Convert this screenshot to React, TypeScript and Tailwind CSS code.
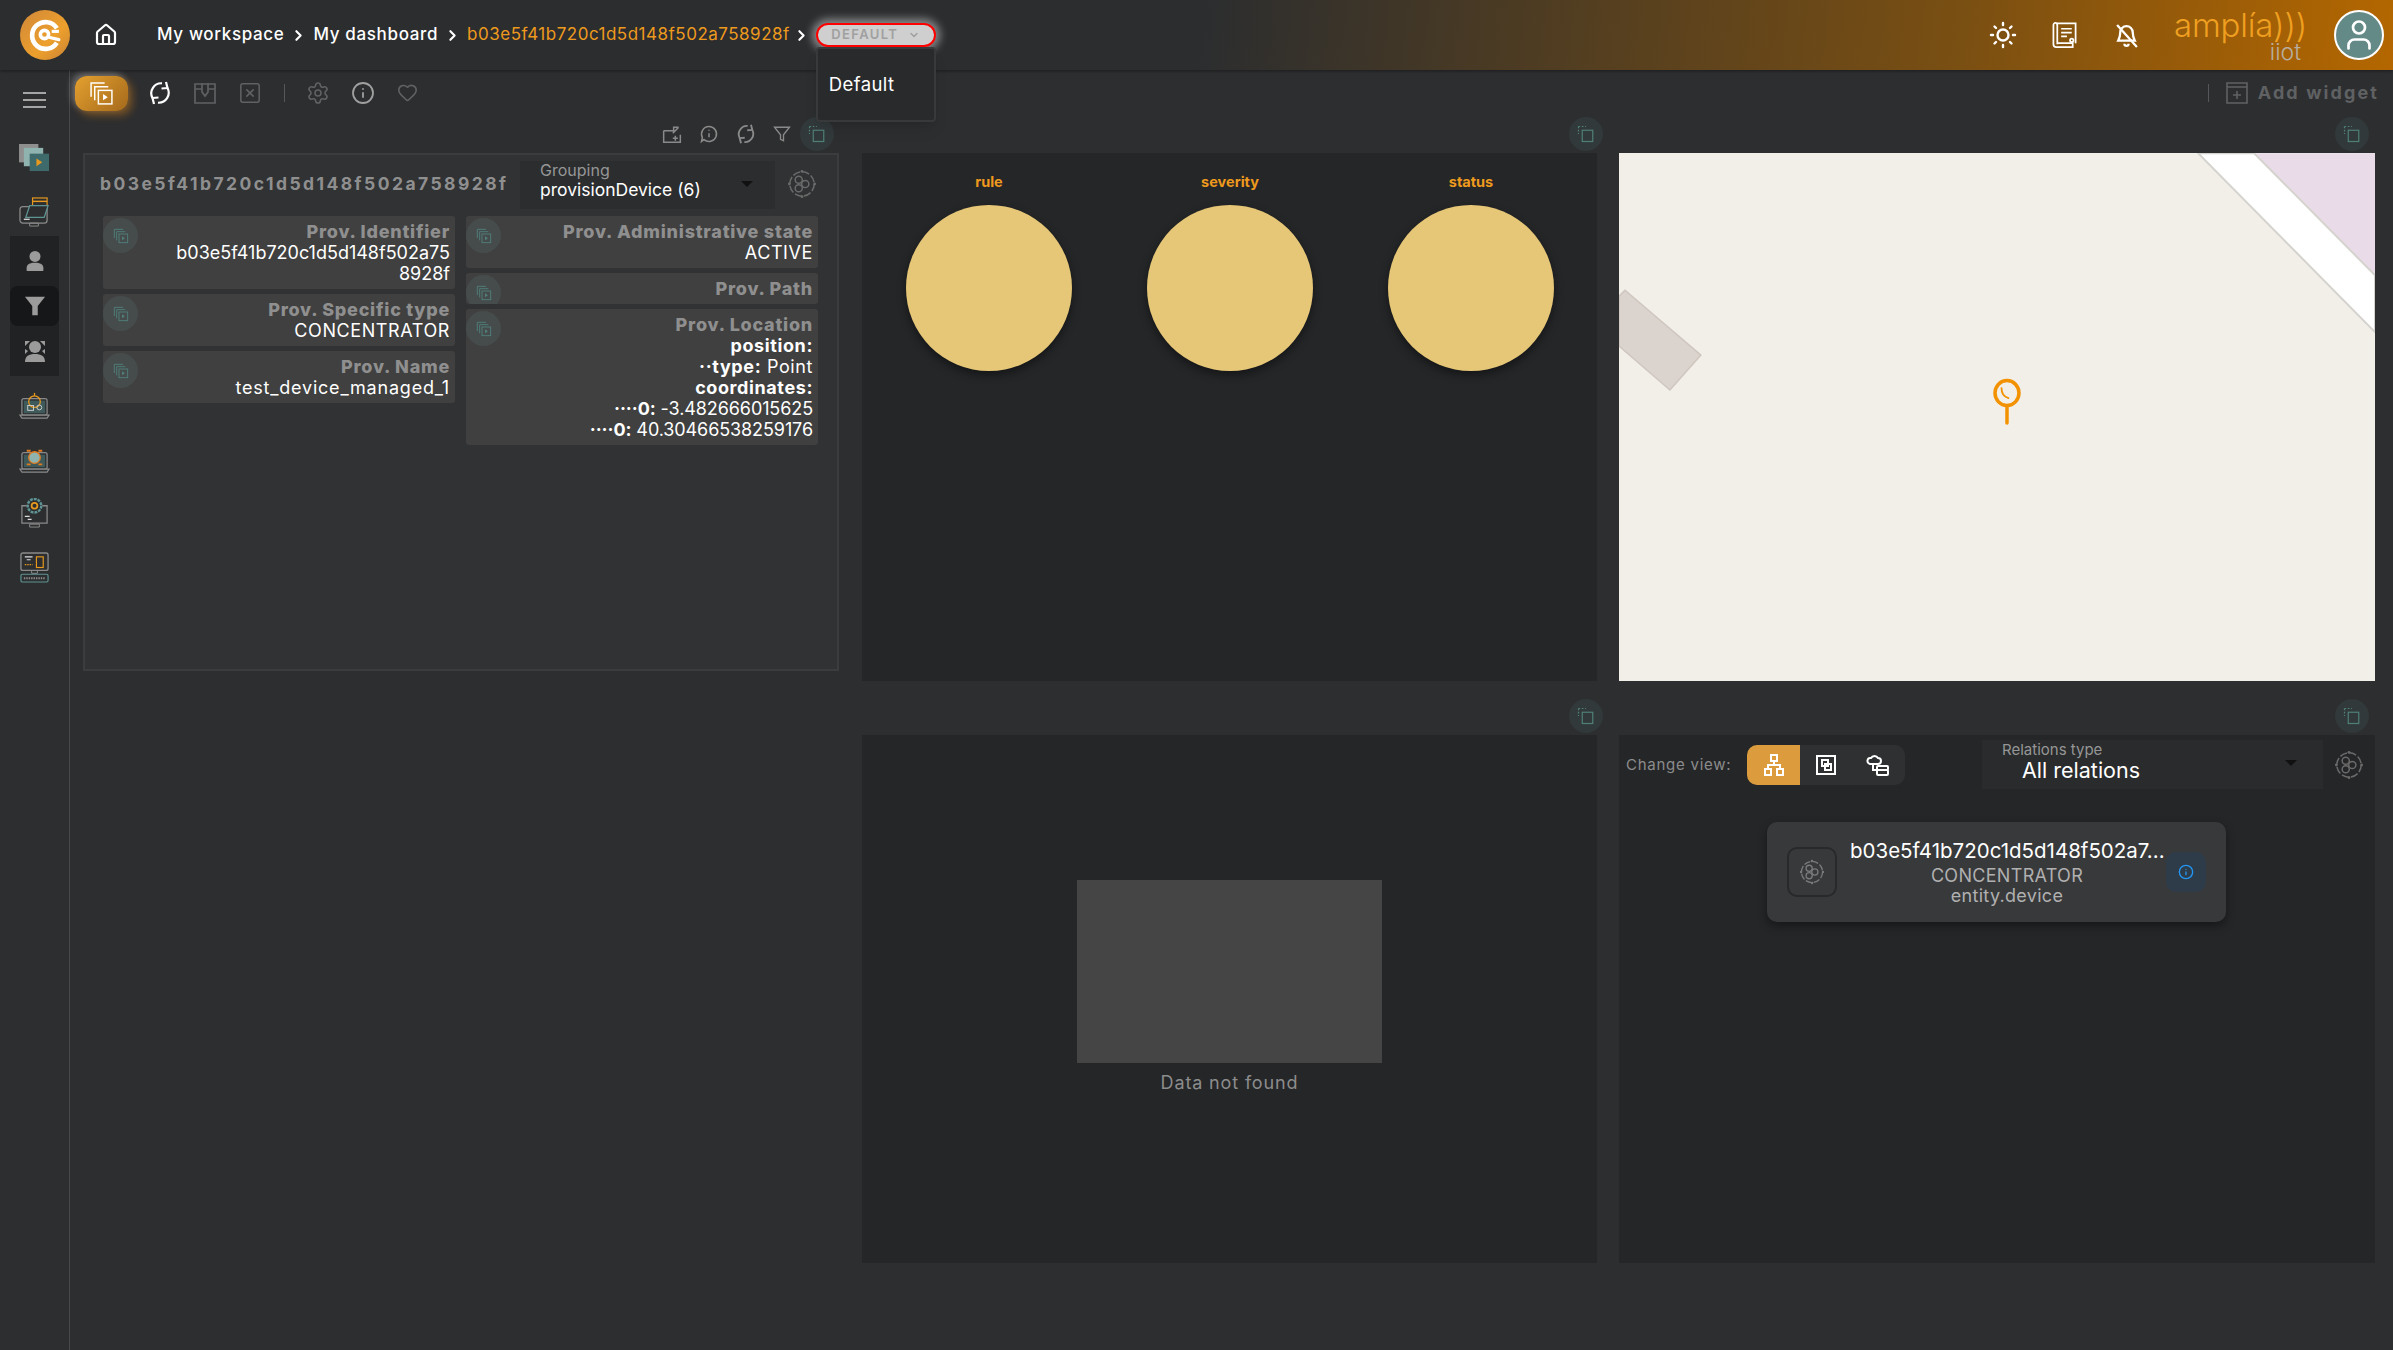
import { ChevronDown, ChevronRight, Home, Info, Heart, Settings, User } from 'lucide-react';

// small reusable drawings
function CopyPlay({ className }: { className?: string }) {
  return (
    <svg viewBox="0 0 24 24" fill="none" stroke="currentColor" strokeWidth="1.400" className={className}>
      <path d="M2 15V2h13" />
      <path d="M5.500 18.500V5.500h13" />
      <rect x="9" y="9" width="13" height="13" />
      <path d="M13.500 12.500v6l4.500-3z" fill="currentColor" stroke="none" />
    </svg>
  );
}

function DashCopy({ className }: { className?: string }) {
  return (
    <svg viewBox="0 0 24 24" fill="none" stroke="currentColor" strokeWidth="1.600" className={className}>
      <path d="M2 2h10M2 2v10" strokeDasharray="2.200 2.200" />
      <rect x="7" y="7" width="14" height="15" />
    </svg>
  );
}

function TargetIcon({ className }: { className?: string }) {
  return (
    <svg viewBox="0 0 32 32" fill="none" stroke="currentColor" strokeWidth="1.600" className={className}>
      <path d="M16 3a13 13 0 0 1 13 13M29 16a13 13 0 0 1-13 13M16 29A13 13 0 0 1 3 16M3 16A13 13 0 0 1 16 3" strokeDasharray="8 2.200" />
      <circle cx="16" cy="2.500" r="1.500" fill="currentColor" stroke="none" />
      <circle cx="16" cy="29.500" r="1.500" fill="currentColor" stroke="none" />
      <circle cx="2.500" cy="16" r="1.500" fill="currentColor" stroke="none" />
      <circle cx="29.500" cy="16" r="1.500" fill="currentColor" stroke="none" />
      <circle cx="12.500" cy="11.500" r="3.800" />
      <circle cx="12.500" cy="20.500" r="3.800" />
      <circle cx="19.500" cy="16" r="3.800" />
    </svg>
  );
}

function RefreshIcon({ className }: { className?: string }) {
  return (
    <svg viewBox="0 0 24 24" fill="none" stroke="currentColor" strokeWidth="2.200" className={className}>
      <path d="M4.500 17A10 10 0 0 1 14 2.300" />
      <path d="M19.500 7A10 10 0 0 1 10 21.700" />
      <path d="M18 1l1.500 6-6 .5" strokeLinejoin="round" fill="none" />
      <path d="M6 23l-1.500-6 6-.5" strokeLinejoin="round" fill="none" />
    </svg>
  );
}

function Laptop({ children }: { children?: React.ReactNode }) {
  return (
    <svg viewBox="0 0 32 32" fill="none" className="w-[31px] h-[31px]">
      <rect x="3" y="9" width="26" height="17" rx="2" stroke="#8a8a8a" strokeWidth="1.300" />
      <rect x="5" y="11" width="22" height="13" fill="#3f5a5a" />
      <path d="M1 26h30l-2 3H3z" stroke="#8a8a8a" strokeWidth="1.200" fill="#2c2e30" />
      {children}
    </svg>
  );
}

function Sidebar() {
  return (
    <aside className="w-[70px] shrink-0 border-r border-[#46484a] flex flex-col items-center pt-[22px]">
      <div className="flex flex-col gap-[5px] mb-[36px]">
        <div className="w-[23px] h-[2px] bg-[#a5a5a5]" />
        <div className="w-[23px] h-[2px] bg-[#a5a5a5]" />
        <div className="w-[23px] h-[2px] bg-[#a5a5a5]" />
      </div>
      <svg viewBox="0 0 32 30" className="w-[31px] h-[29px] mb-[24px]">
        <rect x="0" y="0" width="20" height="19" fill="#8f8f8f" />
        <rect x="5" y="4" width="20" height="19" fill="#8fb3ae" />
        <rect x="11" y="10" width="20" height="18" fill="#3f6a6c" />
        <path d="M18 15v8l6-4z" fill="#e89a1e" />
      </svg>
      <svg viewBox="0 0 32 32" fill="none" className="w-[31px] h-[31px] mb-[8px]">
        <rect x="14" y="1" width="15" height="11" stroke="#e89a1e" strokeWidth="1.200" />
        <path d="M14 4.500h15" stroke="#e89a1e" strokeWidth="1.500" />
        <rect x="1" y="10" width="28" height="17" rx="3" stroke="#8a8a8a" strokeWidth="1.300" />
        <path d="M11 9h19l-4 12H7z" stroke="#5f9494" strokeWidth="1.300" fill="#2c2e30" />
        <path d="M5 23h6" stroke="#ddd" strokeWidth="1.300" />
        <path d="M11 27h9v3h-9z" stroke="#8a8a8a" />
      </svg>
      <div className="w-[49px] h-[140px] bg-[#212223] flex flex-col items-center">
        <div className="h-[50px] flex items-center">
          <svg viewBox="0 0 24 24" fill="#9b9b9b" className="w-[22px] h-[22px]">
            <circle cx="12" cy="7" r="6" />
            <path d="M3 23c-1-7 2-9 9-9s10 2 9 9z" />
          </svg>
        </div>
        <div className="h-[40px] w-[49px] flex items-center justify-center rounded-lg bg-[#161718]">
          <svg viewBox="0 0 24 24" fill="#9b9b9b" className="w-[22px] h-[22px]">
            <path d="M1 2h22l-8 10v10h-6V12z" />
          </svg>
        </div>
        <div className="h-[50px] w-[49px] flex items-center justify-center">
          <svg viewBox="0 0 24 24" className="w-[24px] h-[24px]" fill="#9b9b9b">
            <path d="M2 2h5l-5 5zM22 2h-5l5 5zM2 10l3 2-3 3zM22 10l-3 2 3 3z" />
            <circle cx="12" cy="8" r="6" />
            <path d="M2 23c0-6 4-8 10-8s10 2 10 8z" />
          </svg>
        </div>
      </div>
      <div className="flex flex-col gap-[23px] mt-[14px]">
        <Laptop>
          <circle cx="16" cy="12" r="6" stroke="#e89a1e" strokeWidth="1.300" />
          <path d="M16 3v3" stroke="#e89a1e" strokeWidth="1.300" />
          <rect x="9" y="16" width="6" height="5" stroke="#ccc" />
          <circle cx="21" cy="18" r="2.500" stroke="#ccc" />
        </Laptop>
        <Laptop>
          <circle cx="16" cy="14" r="6" fill="#8fb3ae" stroke="#e07a1e" strokeWidth="1.300" />
          <path d="M8 7h4M20 7h4M8 21h4M20 21h4" stroke="#e07a1e" strokeWidth="2" />
        </Laptop>
        <svg viewBox="0 0 32 32" fill="none" className="w-[31px] h-[31px]">
          <path d="M8 8H3v18h26V8h-5" stroke="#8a8a8a" strokeWidth="1.300" />
          <path d="M11 27h10v3H11z" stroke="#8a8a8a" />
          <circle cx="16" cy="8" r="7" stroke="#5f9494" strokeWidth="2.500" strokeDasharray="3 1" />
          <circle cx="16" cy="8" r="3" stroke="#e89a1e" strokeWidth="1.800" />
          <path d="M6 19h5M9 22h4" stroke="#ddd" strokeWidth="1.300" />
        </svg>
        <svg viewBox="0 0 32 32" fill="none" className="w-[31px] h-[31px]">
          <rect x="2" y="1" width="28" height="18" rx="2" stroke="#8a8a8a" strokeWidth="1.400" />
          <path d="M6 5h8M8 8h4" stroke="#ddd" strokeWidth="1.200" />
          <rect x="18" y="5" width="7" height="11" stroke="#e89a1e" strokeWidth="1.200" />
          <path d="M6 13h8" stroke="#e89a1e" strokeWidth="1.200" strokeDasharray="1.500 1" />
          <path d="M13 19v3h6v-3" stroke="#8a8a8a" />
          <rect x="2" y="23" width="28" height="8" rx="1.500" stroke="#5f9494" strokeWidth="1.200" />
          <path d="M5 27h22" stroke="#8a8a8a" strokeWidth="2" strokeDasharray="1.500 1" />
        </svg>
      </div>
    </aside>
  );
}

function Header() {
  return (
    <header className="relative z-10 h-[70px] shrink-0 flex items-center pl-[20px] pr-[9px] bg-[linear-gradient(97deg,#2b2d2f_0%,#2b2d2f_50%,#7a4f12_82%,#b46700_100%)] shadow-[0_1px_3px_rgba(0,0,0,0.4)]">
      <div className="w-[50px] h-[50px] rounded-full bg-[linear-gradient(135deg,#d0873a,#eda02c_60%,#c98234)] flex items-center justify-center">
        <svg viewBox="0 0 32 32" fill="none" className="w-[33px] h-[33px]">
          <path d="M27 9A13 13 0 1 0 27 23" stroke="#fff" strokeWidth="4.500" />
          <circle cx="15" cy="15" r="4" stroke="#fff" strokeWidth="3.500" />
          <path d="M20 18l9 2" stroke="#fff" strokeWidth="3" strokeLinecap="round" />
          <path d="M22 12h7" stroke="#fff" strokeWidth="3" />
        </svg>
      </div>
      <Home className="w-[24px] h-[24px] text-white ml-[24px]" strokeWidth={2.200} />
      <nav className="flex items-center ml-[39px] text-[17px] font-medium text-white tracking-[0.65px]">
        <span>My workspace</span>
        <ChevronRight className="w-[17px] h-[17px] mx-[6px]" strokeWidth={3} />
        <span>My dashboard</span>
        <ChevronRight className="w-[17px] h-[17px] mx-[6px]" strokeWidth={3} />
        <span className="text-[#ee9a1d] font-normal tracking-[0.5px]">b03e5f41b720c1d5d148f502a758928f</span>
        <ChevronRight className="w-[17px] h-[17px] mx-[3px]" strokeWidth={3} />
      </nav>
      <div className="relative ml-[3px] w-[120px] h-[24px]">
        <div className="w-full h-full rounded-full border-[2px] border-[#f00] bg-[#cfcfcf] shadow-[0_0_8px_4px_rgba(255,255,255,0.45)] flex items-center justify-center gap-[10px] text-[13px] font-semibold tracking-[1.400px] text-[#a0a0a0]">
          DEFAULT
          <ChevronDown className="w-[12px] h-[12px]" strokeWidth={3} />
        </div>
        <div className="absolute left-0 top-[24px] w-[120px] h-[75px] rounded border-[2px] border-[#38393b] bg-[#292a2c] flex items-center pl-[11px] text-[18.500px] tracking-[0.4px] text-white shadow-lg">
          Default
        </div>
      </div>
      <div className="ml-auto flex items-center">
        <svg viewBox="0 0 28 28" fill="none" stroke="#fff" strokeWidth="2.400" strokeLinecap="round" className="w-[28px] h-[28px]">
          <circle cx="14" cy="14" r="5.500" />
          <path d="M14 2v2M14 24v2M2 14h2M24 14h2M5.500 5.500l1.500 1.500M21 21l1.500 1.500M5.500 22.500L7 21M21 7l1.500-1.500" />
        </svg>
        <svg viewBox="0 0 26 28" fill="none" stroke="#fff" strokeWidth="1.800" className="w-[26px] h-[27px] ml-[35px]">
          <path d="M5 23V3a2 2 0 0 0-4 0v20a3 3 0 0 0 3 3h17v-4H5" />
          <path d="M4 1.500h20V22" />
          <path d="M9 7h11M9 11h11M9 15h6" />
          <circle cx="20" cy="19" r="1.800" />
        </svg>
        <svg viewBox="0 0 24 24" fill="none" stroke="#fff" strokeWidth="2.200" className="w-[25px] h-[25px] ml-[36px]">
          <path d="M12 3a6 6 0 0 1 6 6c0 4 1 6 2 8H4c1-2 2-4 2-8a6 6 0 0 1 6-6z" />
          <path d="M10 20a2 2 0 0 0 4 0" />
          <path d="M3 2l19 21" />
        </svg>
        <div className="ml-[39px] w-[138px] flex flex-col items-end pr-[9px]">
          <span className="text-[33px] leading-[34px] font-light text-[#f0a020] tracking-[-0.2px] whitespace-nowrap">amplía)))</span>
          <span className="text-[23px] leading-[20px] font-light text-[#b9aea0] pr-[6px]">iiot</span>
        </div>
        <div className="ml-[18px] w-[50px] h-[50px] rounded-full border-[2px] border-white bg-[#648a88] flex items-center justify-center">
          <User className="w-[36px] h-[36px] text-white" strokeWidth={1.800} />
        </div>
      </div>
    </header>
  );
}

function Toolbar() {
  return (
    <div className="h-[45px] shrink-0 flex items-center pl-[5px] pr-[15px] text-[#5f6163]">
      <div className="w-[53px] h-[35px] mt-[1px] rounded-[12px] bg-[linear-gradient(135deg,#e4a12f,#a5691b)] shadow-[-3px_-3px_7px_rgba(255,255,255,0.3),4px_4px_9px_rgba(220,130,20,0.45)] flex items-center justify-center">
        <CopyPlay className="w-[25px] h-[25px] text-white" />
      </div>
      <RefreshIcon className="w-[24px] h-[24px] text-white ml-[20px]" />
      <svg viewBox="0 0 24 24" fill="none" stroke="currentColor" strokeWidth="1.700" className="w-[24px] h-[24px] ml-[21px]">
        <path d="M2 3h20v19H2zM2 8h7M15 8h7" />
        <path d="M9 2v9l3 4 3-4V2" />
      </svg>
      <svg viewBox="0 0 24 24" fill="none" stroke="currentColor" strokeWidth="1.700" className="w-[22px] h-[22px] ml-[22px]">
        <rect x="2" y="2" width="20" height="20" rx="2" />
        <path d="M8 8l8 8M16 8l-8 8" />
      </svg>
      <div className="w-[1px] h-[18px] bg-[#55575a] ml-[23px]" />
      <Settings className="w-[24px] h-[24px] ml-[21px]" strokeWidth={1.600} />
      <Info className="w-[24px] h-[24px] ml-[21px] text-[#a0a0a0]" strokeWidth={1.800} />
      <Heart className="w-[21px] h-[21px] ml-[22px]" strokeWidth={1.800} />
      <div className="ml-auto flex items-center">
        <div className="w-[1px] h-[18px] bg-[#55575a] mr-[16px]" />
        <svg viewBox="0 0 24 24" fill="none" stroke="currentColor" strokeWidth="1.600" className="w-[24px] h-[24px] mr-[9px]">
          <path d="M2 2h20v20H2zM2 6h20M12 10v8M8 14h8" />
        </svg>
        <span className="text-[18px] font-bold tracking-[2.100px] -mr-[1px]">Add widget</span>
      </div>
    </div>
  );
}

function CopyBadge() {
  return (
    <div className="w-[34px] h-[34px] rounded-full bg-[#32393a] flex items-center justify-center">
      <DashCopy className="w-[18px] h-[18px] text-[#4f8078]" />
    </div>
  );
}

function WidgetHead({ children, className }: { children?: React.ReactNode; className?: string }) {
  return (
    <div className={`h-[38px] flex items-center justify-end gap-[17px] ${className ?? 'pr-[6px]'}`}>
      {children}
      <CopyBadge />
    </div>
  );
}

function Field({ title, children }: { title: string; children?: React.ReactNode }) {
  return (
    <div className="relative overflow-hidden rounded-[3px] bg-[#404040] pr-[5px] pt-[5px] pb-[5px] text-right text-[18px] leading-[21px] tracking-[0.6px] text-white">
      <div className="absolute left-0 top-[2px] w-[35px] h-[35px] rounded-full bg-[#464c4c] flex items-center justify-center">
        <CopyPlay className="w-[16px] h-[16px] text-[#4f7f7a]" />
      </div>
      <div className="font-extrabold text-[#8f8f8f] tracking-[0.75px]">{title}</div>
      {children}
    </div>
  );
}

function DevicePanel() {
  return (
    <div className="h-[518px] w-[756px] border-[2px] border-[#3a3c3e] bg-[#303234] pl-[18px] pr-[19px]">
      <div className="h-[61px] flex items-center">
        <div className="w-[420px] -ml-[3px] pb-[3px] text-[17.500px] font-bold tracking-[2.450px] text-[#8f8f8f] whitespace-nowrap">b03e5f41b720c1d5d148f502a758928f</div>
        <div className="relative w-[255px] h-[48px] bg-[#2b2d2f] pl-[20px] -mt-[2px] text-[17.500px] leading-[20px] text-white">
          <div className="text-[16px] leading-[19px] text-[#969696]">Grouping</div>
          provisionDevice (6)
          <div className="absolute right-[22px] top-[20px] w-0 h-0 border-x-[6px] border-x-transparent border-t-[6px] border-t-[#111]" />
        </div>
        <TargetIcon className="w-[30px] h-[30px] ml-[12px] mb-[3px] text-[#6a6a6a]" />
      </div>
      <div className="grid grid-cols-2 gap-x-[11px] items-start">
        <div className="flex flex-col gap-[5px]">
          <Field title="Prov. Identifier">
            <span className="tracking-[0px]">
              b03e5f41b720c1d5d148f502a75
              <br />
              8928f
            </span>
          </Field>
          <Field title="Prov. Specific type">CONCENTRATOR</Field>
          <Field title="Prov. Name">
            <span className="tracking-[0.8px]">test_device_managed_1</span>
          </Field>
        </div>
        <div className="flex flex-col gap-[5px]">
          <Field title="Prov. Administrative state">ACTIVE</Field>
          <Field title="Prov. Path" />
          <Field title="Prov. Location">
            <div className="font-bold">position:</div>
            <div><span className="font-bold">··type:</span> Point</div>
            <div className="font-bold">coordinates:</div>
            <div className="tracking-[-0.1px]"><span className="font-bold">····0:</span> -3.482666015625</div>
            <div className="tracking-[-0.1px]"><span className="font-bold">····0:</span> 40.30466538259176</div>
          </Field>
        </div>
      </div>
    </div>
  );
}

function PieColumn({ label }: { label: string }) {
  return (
    <div className="flex flex-col items-center">
      <div className="text-[14.500px] leading-[20px] font-bold text-[#ee9a1d]">{label}</div>
      <div className="mt-[13px] w-[166px] h-[166px] rounded-full bg-[#e6c777] shadow-[0_4px_10px_rgba(0,0,0,0.45)]" />
    </div>
  );
}

function ChartsPanel() {
  return (
    <div className="h-[528px] bg-[#252628] pt-[19px] pl-[44px] pr-[43px]">
      <div className="grid grid-cols-3 gap-[75px]">
        <PieColumn label="rule" />
        <PieColumn label="severity" />
        <PieColumn label="status" />
      </div>
    </div>
  );
}

function MapPanel() {
  return (
    <div className="relative h-[528px] overflow-hidden bg-[#f2efe9]">
      {/* map tile shapes */}
      <svg viewBox="0 0 757 528" className="absolute inset-0 w-full h-full">
        <path d="M636 0H757V122z" fill="#eadbe8" />
        <path d="M580 0h56l121 122v57z" fill="#fff" stroke="#d5d3ce" strokeWidth="2" />
        <path d="M0 143l6-6 76 65-31 35-51-44z" fill="#dbd3cd" stroke="#cfc6bf" strokeWidth="1.500" />
        <ellipse cx="388.500" cy="240" rx="12" ry="12.500" fill="none" stroke="#f39200" strokeWidth="3.500" />
        <path d="M388.500 253v17" stroke="#f39200" strokeWidth="3.500" strokeLinecap="round" />
        <path d="M383 235c0 6 3 9 7 10" fill="none" stroke="#f39200" strokeWidth="1.800" strokeLinecap="round" />
      </svg>
    </div>
  );
}

function NotFoundPanel() {
  return (
    <div className="h-[528px] bg-[#252628] flex flex-col items-center pt-[145px]">
      <div className="w-[305px] h-[183px] bg-[#454545]" />
      <div className="mt-[8px] text-[18px] leading-[24px] text-[#8c8c8c] tracking-[0.85px]">Data not found</div>
    </div>
  );
}

function RelationsPanel() {
  return (
    <div className="h-[528px] bg-[#252628] pt-[5px] pl-[7px]">
      <div className="flex items-center h-[49px]">
        <span className="w-[121px] pt-[1px] text-[15px] text-[#8c8c8c] tracking-[0.75px] whitespace-nowrap">Change view:</span>
        <div className="w-[158px] h-[40px] rounded-[10px] bg-[#2e3032] flex items-center overflow-hidden">
          <div className="w-[53px] h-full bg-[#dc9c3e] flex items-center justify-center">
            <svg viewBox="0 0 24 24" fill="none" stroke="#fff" strokeWidth="2" className="w-[24px] h-[24px]">
              <rect x="9" y="2" width="6" height="6" />
              <rect x="3" y="16" width="6" height="6" />
              <rect x="15" y="16" width="6" height="6" />
              <path d="M12 8v4M6 16v-4h12v4" />
            </svg>
          </div>
          <div className="w-[52px] flex items-center justify-center">
            <svg viewBox="0 0 24 24" fill="none" stroke="#fff" strokeWidth="2" className="w-[24px] h-[24px]">
              <rect x="3" y="3" width="18" height="18" />
              <rect x="8" y="7" width="6" height="6" />
              <rect x="11" y="11" width="6" height="6" />
            </svg>
          </div>
          <div className="w-[52px] flex items-center justify-center">
            <svg viewBox="0 0 24 24" fill="none" stroke="#fff" strokeWidth="2" className="w-[24px] h-[24px]">
              <path d="M4 11a3 3 0 0 1 1-6 4 4 0 0 1 7 0 3 3 0 0 1 0 6H4z" />
              <rect x="11" y="13" width="11" height="4" rx="1" />
              <rect x="11" y="17" width="11" height="5" rx="1" />
              <path d="M7 11v6h4" />
            </svg>
          </div>
        </div>
        <div className="relative ml-[77px] w-[341px] h-[49px] bg-[#292b2c] pl-[20px] pt-[1px]">
          <div className="text-[15px] leading-[17px] text-[#969696]">Relations type</div>
          <div className="pl-[20px] text-[21.500px] leading-[25px] text-white">All relations</div>
          <div className="absolute right-[26px] top-[20px] w-0 h-0 border-x-[6px] border-x-transparent border-t-[6px] border-t-[#111]" />
        </div>
        <TargetIcon className="w-[30px] h-[30px] ml-[11px] text-[#6a6a6a]" />
      </div>
      <div className="ml-[141px] mt-[33px] w-[459px] h-[100px] rounded-[10px] bg-[#38393b] shadow-[0_4px_10px_rgba(0,0,0,0.4)] flex items-center pl-[20px] pr-[20px]">
        <div className="w-[50px] h-[50px] shrink-0 rounded-[10px] border-[2px] border-[#28292a] flex items-center justify-center">
          <TargetIcon className="w-[26px] h-[26px] text-[#7a7a7a]" />
        </div>
        <div className="flex-1 min-w-0 pl-[13px] pr-[2px] text-center">
          <div className="whitespace-nowrap text-[20.500px] leading-[24px] text-white">b03e5f41b720c1d5d148f502a7...</div>
          <div className="text-[18px] leading-[20px] mt-[3px] tracking-[0.3px] text-[#b0b0b0]">CONCENTRATOR</div>
          <div className="text-[18px] leading-[20px] tracking-[0.3px] text-[#b0b0b0]">entity.device</div>
        </div>
        <div className="w-[40px] h-[40px] shrink-0 rounded-[10px] bg-[#2e3c4a] flex items-center justify-center">
          <Info className="w-[16px] h-[16px] text-[#2196f3]" strokeWidth={2} />
        </div>
      </div>
    </div>
  );
}

export default function App() {
  return (
    <div className="w-[2393px] h-[1350px] overflow-hidden flex flex-col bg-[#2d2e30] font-['Inter','Noto_Sans',sans-serif]">
      <Header />
      <div className="flex flex-1 min-h-0">
        <Sidebar />
        <main className="flex-1 min-w-0 flex flex-col">
          <Toolbar />
          <div className="grid grid-cols-[757px_735px_756px] gap-x-[22px] pl-[13px] grid-rows-[566px_566px] gap-y-[16px]">
            <div>
              <WidgetHead>
                <svg viewBox="0 0 24 24" fill="none" stroke="#8a8a8a" strokeWidth="1.800" className="w-[20px] h-[20px]">
                  <path d="M2 8h12M2 8v14h20v-9M14 10V4h6M20 4l-7 7M13 17h6M16 14v6" />
                </svg>
                <svg viewBox="0 0 24 24" fill="none" stroke="#8a8a8a" strokeWidth="1.800" className="w-[20px] h-[20px]">
                  <path d="M12 3a9 9 0 1 1-6 15.700L3 21l1-5a9 9 0 0 1 8-13zM12 11v5M12 7v1" />
                </svg>
                <RefreshIcon className="w-[20px] h-[20px] text-[#8a8a8a]" />
                <svg viewBox="0 0 24 24" fill="none" stroke="#8a8a8a" strokeWidth="1.800" className="w-[18px] h-[18px] -mr-[8px]">
                  <path d="M2 3h20l-8 10v8l-4-2v-6z" />
                </svg>
              </WidgetHead>
              <DevicePanel />
            </div>
            <div>
              <WidgetHead className="-mr-[6px]" />
              <ChartsPanel />
            </div>
            <div>
              <WidgetHead />
              <MapPanel />
            </div>
            <div />
            <div>
              <WidgetHead className="-mr-[6px]" />
              <NotFoundPanel />
            </div>
            <div>
              <WidgetHead />
              <RelationsPanel />
            </div>
          </div>
        </main>
      </div>
    </div>
  );
}
